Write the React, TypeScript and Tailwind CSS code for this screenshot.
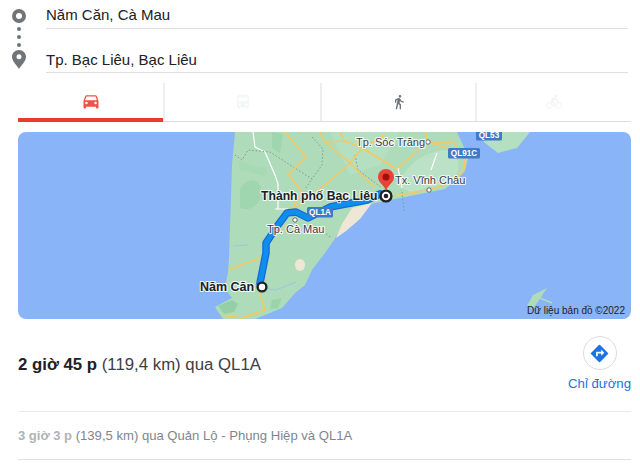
const FONT = "font-['Liberation_Sans',Arial,sans-serif]";

function MatIcon({ d, className }: { d: string; className: string }) {
  return (
    <svg viewBox="0 0 24 24" className={className} fill="currentColor">
      <path d={d} />
    </svg>
  );
}

const CAR =
  'M18.92 6.01C18.72 5.42 18.16 5 17.5 5h-11c-.66 0-1.21.42-1.42 1.01L3 12v8c0 .55.45 1 1 1h1c.55 0 1-.45 1-1v-1h12v1c0 .55.45 1 1 1h1c.55 0 1-.45 1-1v-8l-2.08-5.99zM6.5 16c-.83 0-1.5-.67-1.5-1.5S5.67 13 6.5 13s1.5.67 1.5 1.5S7.33 16 6.5 16zm11 0c-.83 0-1.5-.67-1.5-1.5s.67-1.5 1.5-1.5 1.5.67 1.5 1.5-.67 1.5-1.5 1.5zM5 11l1.5-4.5h11L19 11H5z';
const BUS =
  'M4 16c0 .88.39 1.67 1 2.22V20c0 .55.45 1 1 1h1c.55 0 1-.45 1-1v-1h8v1c0 .55.45 1 1 1h1c.55 0 1-.45 1-1v-1.78c.61-.55 1-1.34 1-2.22V6c0-3.5-3.58-4-8-4s-8 .5-8 4v10zm3.5 1c-.83 0-1.5-.67-1.5-1.5S6.67 14 7.5 14s1.5.67 1.5 1.5S8.33 17 7.5 17zm9 0c-.83 0-1.5-.67-1.5-1.5s.67-1.5 1.5-1.5 1.5.67 1.5 1.5-.67 1.5-1.5 1.5zm1.5-6H6V6h12v5z';
const WALK =
  'M13.5 5.5c1.1 0 2-.9 2-2s-.9-2-2-2-2 .9-2 2 .9 2 2 2zM9.8 8.9L7 23h2.1l1.8-8 2.1 2v6h2v-7.5l-2.1-2 .6-3C14.8 12 16.8 13 19 13v-2c-1.9 0-3.5-1-4.3-2.4l-1-1.6c-.4-.6-1-1-1.7-1-.3 0-.5.1-.8.1L6 8.3V13h2V9.6l1.8-.7';
const BIKE =
  'M15.5 5.5c1.1 0 2-.9 2-2s-.9-2-2-2-2 .9-2 2 .9 2 2 2zM5 12c-2.8 0-5 2.2-5 5s2.2 5 5 5 5-2.2 5-5-2.2-5-5-5zm0 8.5c-1.9 0-3.5-1.6-3.5-3.5s1.6-3.5 3.5-3.5 3.5 1.6 3.5 3.5-1.6 3.5-3.5 3.5zm5.8-10l2.4-2.4.8.8c1.3 1.3 3 2.1 5.1 2.1V9c-1.5 0-2.7-.6-3.6-1.5l-1.9-1.9c-.5-.4-1-.6-1.6-.6s-1.1.2-1.4.6L7.8 8.4c-.4.4-.6.9-.6 1.4 0 .6.2 1.1.6 1.4L11 14v5h2v-6.2l-2.2-2.3zM19 12c-2.8 0-5 2.2-5 5s2.2 5 5 5 5-2.2 5-5-2.2-5-5-5zm0 8.5c-1.9 0-3.5-1.6-3.5-3.5s1.6-3.5 3.5-3.5 3.5 1.6 3.5 3.5-1.6 3.5-3.5 3.5z';

const ROUTE = 'M260 283 L266 253 L266 243 L278 225 L287 213 L296 212 L308 218 L330 207 L367 200 L380 194';

function Label({ x, y, size, bold, children }: { x: number; y: number; size: number; bold?: boolean; children: string }) {
  return (
    <text
      x={x}
      y={y}
      fontSize={size}
      fontWeight={bold ? 700 : 400}
      fill={bold ? '#202124' : '#3c4043'}
      stroke="#ffffff"
      strokeOpacity={0.85}
      strokeWidth={2.2}
      strokeLinejoin="round"
      paintOrder="stroke"
      fontFamily="'Liberation Sans', Arial, sans-serif"
    >
      {children}
    </text>
  );
}

function Shield({ x, y, w, children }: { x: number; y: number; w: number; children: string }) {
  return (
    <g>
      <rect x={x} y={y} width={w} height={10.5} rx={1.5} fill="#3f79c9" />
      <text
        x={x + w / 2}
        y={y + 8.3}
        fontSize={8.2}
        fontWeight={700}
        textAnchor="middle"
        fill="#ffffff"
        fontFamily="'Liberation Sans', Arial, sans-serif"
      >
        {children}
      </text>
    </g>
  );
}

function MapDrawing() {
  const road = { fill: 'none', stroke: '#f8c760', strokeWidth: 1.5, strokeLinejoin: 'round' as const };
  const dots = { fill: 'none', stroke: '#7f9a8b', strokeWidth: 1, strokeDasharray: '1.5 2' };
  return (
    <svg viewBox="18 132 613 187" className="block w-full h-full">
      <rect x="18" y="132" width="613" height="187" fill="#8ab4f8" />

      {/* land */}
      <path
        d="M235 132 L232 165 L231 199 L230 227 L229 258 L228 272 L225 288 L232 298 L215 307 L223 319 L255 319 L282 308 L295 293 L305 285 L312 270 L325 253 L334 240 L345 222 L352 209 L375 203 L410 196 L445 189 L458 178 L465 171 L468 158 L463 145 L457 132 Z"
        fill="#aedcba"
      />
      <path d="M478 132 L485 143 L498 153 L517 148 L530 132 Z" fill="#b4dfc0" />
      <path d="M527 306 L533 295 L547 288 L539 300 L533 309 Z" fill="#aedcba" />
      <path d="M540 298 L552 303" stroke="#aedcba" strokeWidth="1.5" fill="none" />

      {/* lighter and darker patches */}
      <path d="M398 186 C405 165 425 150 450 150 C462 160 462 175 445 184 L410 192 Z" fill="#bbe2c6" />
      <path d="M330 132 L400 132 L380 165 L350 175 Z" fill="#b4dfc0" />
      <path d="M272 132 L283 134 L280 154 L272 148 Z" fill="#a0d6af" />
      <path d="M238 160 L250 165 L267 168 L266 177 L250 172 L240 170 Z" fill="#a6d9b4" />
      <path d="M240 190 C244 178 260 176 261 190 C262 205 250 212 240 208 Z" fill="#a0d6af" />
      <path d="M218 306 L232 300 L238 304 L234 312 L224 314 Z" fill="#93d0a5" />
      <path d="M272 300 L282 298 L278 308 L270 309 Z" fill="#9bd4ab" />

      {/* sand */}
      <path d="M372 203 L352 208 L342 224 L336 238 L346 231 L360 219 Z" fill="#efe7d6" />
      <ellipse cx="300" cy="265" rx="5" ry="6" fill="#efe7d6" />

      {/* water inland */}
      <path d="M233 246 L248 245 M246 285 L276 290 L296 282" stroke="#9cc6e0" strokeWidth="1" fill="none" />

      {/* white minor roads */}
      <path
        d="M253 132 L255 147 L265 152 L275 175 L278 184 L278 209 M275 209 L288 209"
        fill="none"
        stroke="#ffffff"
        strokeWidth="1.2"
      />
      <path d="M398 168 L402 188 M437 153 L431 170" fill="none" stroke="#ffffff" strokeWidth="1.2" />

      {/* dotted boundaries */}
      <path d="M235 155 L242 160 L248 150 L270 152 L312 179 L305 189" {...dots} />
      <path d="M312 137 L323 149 L322 165 L312 179" {...dots} />
      <path d="M355 155 L358 170 L382 188 M402 192 L404 212" {...dots} />
      <path d="M326 234 L332 238" {...dots} />

      {/* yellow roads */}
      <path d="M285 132 L306 157 L288 174 L302 192 L292 209" {...road} />
      <path d="M290 212 L325 185 L350 163 L362 148 L385 135" {...road} />
      <path d="M320 132 L325 142 L350 163 L375 188" {...road} />
      <path d="M325 142 L345 141 L362 148 L395 168" {...road} />
      <path d="M395 170 L428 142 L453 142 L465 158 L464 170 L455 180 L430 190 L392 196" {...road} />
      <path d="M340 132 L345 142 M425 132 L428 142 L455 150" {...road} />
      <path d="M260 293 L265 310 L242 318 L223 315" {...road} />
      <path d="M230 270 L245 263 L260 259" {...road} />

      {/* route */}
      <path d={ROUTE} fill="none" stroke="#1967d2" strokeWidth="7.5" strokeLinejoin="round" strokeLinecap="round" />
      <path d={ROUTE} fill="none" stroke="#0e8ff0" strokeWidth="5" strokeLinejoin="round" strokeLinecap="round" />

      {/* small places */}
      <circle cx="295" cy="220" r="2.2" fill="#fff" stroke="#5f6368" />
      <circle cx="428" cy="142" r="2.2" fill="#fff" stroke="#5f6368" />
      <circle cx="429" cy="190" r="2.2" fill="#fff" stroke="#5f6368" />

      <Shield x={307} y={207} w={26}>QL1A</Shield>
      <Shield x={448} y={148} w={32}>QL91C</Shield>
      <Shield x={476} y={130} w={26}>QL53</Shield>

      <Label x={356} y={146} size={11}>Tp. Sóc Trăng</Label>
      <Label x={395} y={184} size={11}>Tx. Vĩnh Châu</Label>
      <Label x={267} y={233} size={11}>Tp. Cà Mau</Label>
      <Label x={261} y={200} size={12.2} bold>Thành phố Bạc Liêu</Label>
      <Label x={200} y={291} size={12.5} bold>Năm Căn</Label>

      {/* start point */}
      <circle cx="262" cy="287" r="4.4" fill="#fff" stroke="#202124" strokeWidth="2.4" />

      {/* destination */}
      <circle cx="386" cy="196" r="5.4" fill="#fff" stroke="#202124" strokeWidth="2.4" />
      <circle cx="386" cy="196" r="2.3" fill="#202124" />
      <path d="M386 190.5 C384 185 378 182.5 378 177 A8 8 0 0 1 394 177 C394 182.5 388 185 386 190.5 Z" fill="#ea4335" />
      <circle cx="386" cy="177" r="3.5" fill="#a50e0e" />
    </svg>
  );
}

export default function App() {
  return (
    <div className={`${FONT} w-[640px] h-[476px] overflow-hidden bg-white text-[#202124]`}>
      {/* from / to */}
      <div className="flex">
        <div className="w-[38px] flex flex-col items-center pt-[9px] shrink-0">
          <div className="w-[14px] h-[14px] rounded-full border-[4px] border-[#70757a]" />
          <div className="w-1 h-1 rounded-full bg-[#70757a] mt-[4px]" />
          <div className="w-1 h-1 rounded-full bg-[#70757a] mt-[4px]" />
          <div className="w-1 h-1 rounded-full bg-[#70757a] mt-[4px]" />
          <svg viewBox="0 0 14 19" className="w-[14px] h-[19px] mt-[3px]">
            <path
              fillRule="evenodd"
              fill="#70757a"
              d="M7 0C3.1 0 0 3 0 6.8 0 11.5 5.4 16 7 19c1.6-3 7-7.5 7-12.2C14 3 10.9 0 7 0zm0 9.2a2.5 2.5 0 1 1 0-5 2.5 2.5 0 0 1 0 5z"
            />
          </svg>
        </div>
        <div className="ml-2 w-[582px]">
          <div className="h-[29px] border-b border-[#e0e0e0] text-[15px] leading-[30px]">Năm Căn, Cà Mau</div>
          <div className="h-[44px] border-b border-[#e0e0e0] text-[15px] leading-[61px]">Tp. Bạc Liêu, Bạc Liêu</div>
        </div>
      </div>

      <div className="mx-[18px] w-[613px]">
        {/* travel modes */}
        <div className="mt-[10px] flex h-[39px] border-b border-[#dadce0]">
          <div className="w-[145px] flex items-center justify-center border-b-[4px] border-[#ea3a2e] -mb-px">
            <MatIcon d={CAR} className="w-5 h-5 text-[#f0524a]" />
          </div>
          <div className="w-[157px] flex items-center justify-center border-l-2 border-[#eeeeee]">
            <MatIcon d={BUS} className="w-[18px] h-[18px] text-[#f4f6f8]" />
          </div>
          <div className="w-[155px] flex items-center justify-center border-l-2 border-[#eeeeee]">
            <MatIcon d={WALK} className="w-4 h-4 text-[#70757a]" />
          </div>
          <div className="flex-1 flex items-center justify-center border-l-2 border-[#eeeeee]">
            <MatIcon d={BIKE} className="w-4 h-4 text-[#f1f3f4]" />
          </div>
        </div>

        {/* map */}
        <div className="relative mt-[10px] h-[187px] rounded-lg overflow-hidden">
          <MapDrawing />
          <span className="absolute right-[6px] bottom-[2px] text-[10px] leading-[12px] text-[#202124]">
            Dữ liệu bản đồ ©2022
          </span>
        </div>

        {/* main route */}
        <div className="h-[93px] border-b border-[#e8eaed] flex justify-between">
          <div className="pt-[36px] text-[16.8px] leading-[20px] text-[#3c4043]">
            <span className="font-bold text-[#202124]">2 giờ 45 p</span> (119,4 km) qua QL1A
          </div>
          <div className="flex flex-col items-center pt-[17px]">
            <div className="w-[34px] h-[34px] rounded-full border border-[#dadce0] flex items-center justify-center">
              <svg viewBox="0 0 24 24" className="w-[21px] h-[21px]">
                <path
                  fill="#1a73e8"
                  d="M21.71 11.29l-9-9a1 1 0 0 0-1.42 0l-9 9a1 1 0 0 0 0 1.42l9 9a1 1 0 0 0 1.42 0l9-9a1 1 0 0 0 0-1.42z"
                />
                <path fill="#ffffff" d="M14 14.5V12h-4v3H8v-4a1 1 0 0 1 1-1h5V7.5l3.5 3.5z" />
              </svg>
            </div>
            <div className="mt-[5px] text-[13.2px] leading-[18px] whitespace-nowrap text-[#1a73e8]">Chỉ đường</div>
          </div>
        </div>

        {/* alternative route */}
        <div className="h-[48px] border-b border-[#e0e0e0] flex items-center text-[13px] text-[#80868b]">
          <span className="font-bold text-[#b0b3b7]">3 giờ 3 p</span>
          <span className="text-[13.1px]">&nbsp;(139,5 km) qua Quản Lộ - Phụng Hiệp và QL1A</span>
        </div>
      </div>
    </div>
  );
}
